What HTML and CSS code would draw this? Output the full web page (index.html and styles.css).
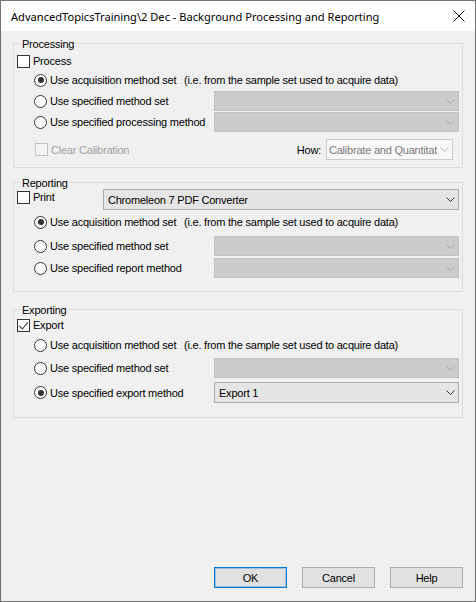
FILE: index.html
```html
<!DOCTYPE html>
<html lang="en">
<head>
    <meta charset="UTF-8">
    <title>Background Processing and Reporting</title>
    <link rel="stylesheet" href="styles.css">
</head>
<body>
    <div class="window">
        <div class="titlebar">
            <span class="title">AdvancedTopicsTraining\2 Dec - Background Processing and Reporting</span>
            <svg class="close" width="12" height="12" viewBox="0 0 12 12">
                <path d="M0.5 0.5 L11.5 11.5 M11.5 0.5 L0.5 11.5" stroke="#111" stroke-width="1" fill="none"/>
            </svg>
        </div>

        <div class="content">
            <!-- Processing -->
            <div class="group processing">
                <span class="legend">Processing</span>
                <label class="check-row"><input type="checkbox">Process</label>
                <div class="row option first">
                    <label class="opt opt-short"><input type="radio" name="proc" checked>Use acquisition method set</label>
                    <span class="note">(i.e. from the sample set used to acquire data)</span>
                </div>
                <div class="row option">
                    <label class="opt"><input type="radio" name="proc">Use specified method set</label>
                    <div class="combo"><span></span><svg class="chev" width="9" height="5" viewBox="0 0 9 5"><path d="M0.5 0.5 L4.5 4.5 L8.5 0.5"/></svg></div>
                </div>
                <div class="row option">
                    <label class="opt"><input type="radio" name="proc">Use specified processing method</label>
                    <div class="combo"><span></span><svg class="chev" width="9" height="5" viewBox="0 0 9 5"><path d="M0.5 0.5 L4.5 4.5 L8.5 0.5"/></svg></div>
                </div>
                <div class="row how-row">
                    <label class="clear disabled"><input type="checkbox" disabled>Clear Calibration</label>
                    <span class="how">How:</span>
                    <div class="combo how-combo"><span>Calibrate and Quantitat</span><svg class="chev" width="9" height="5" viewBox="0 0 9 5"><path d="M0.5 0.5 L4.5 4.5 L8.5 0.5"/></svg></div>
                </div>
            </div>

            <!-- Reporting -->
            <div class="group reporting">
                <span class="legend">Reporting</span>
                <div class="row print-row">
                    <label class="check-row print"><input type="checkbox">Print</label>
                    <div class="combo enabled"><span>Chromeleon 7 PDF Converter</span><svg class="chev" width="9" height="5" viewBox="0 0 9 5"><path d="M0.5 0.5 L4.5 4.5 L8.5 0.5"/></svg></div>
                </div>
                <div class="row option r1">
                    <label class="opt opt-short"><input type="radio" name="rep" checked>Use acquisition method set</label>
                    <span class="note">(i.e. from the sample set used to acquire data)</span>
                </div>
                <div class="row option r2">
                    <label class="opt"><input type="radio" name="rep">Use specified method set</label>
                    <div class="combo"><span></span><svg class="chev" width="9" height="5" viewBox="0 0 9 5"><path d="M0.5 0.5 L4.5 4.5 L8.5 0.5"/></svg></div>
                </div>
                <div class="row option r3">
                    <label class="opt"><input type="radio" name="rep">Use specified report method</label>
                    <div class="combo"><span></span><svg class="chev" width="9" height="5" viewBox="0 0 9 5"><path d="M0.5 0.5 L4.5 4.5 L8.5 0.5"/></svg></div>
                </div>
            </div>

            <!-- Exporting -->
            <div class="group exporting">
                <span class="legend">Exporting</span>
                <label class="check-row"><input type="checkbox" checked>Export</label>
                <div class="row option r1">
                    <label class="opt opt-short"><input type="radio" name="exp">Use acquisition method set</label>
                    <span class="note">(i.e. from the sample set used to acquire data)</span>
                </div>
                <div class="row option r2">
                    <label class="opt"><input type="radio" name="exp">Use specified method set</label>
                    <div class="combo"><span></span><svg class="chev" width="9" height="5" viewBox="0 0 9 5"><path d="M0.5 0.5 L4.5 4.5 L8.5 0.5"/></svg></div>
                </div>
                <div class="row option r3">
                    <label class="opt"><input type="radio" name="exp" checked>Use specified export method</label>
                    <div class="combo enabled"><span>Export 1</span><svg class="chev" width="9" height="5" viewBox="0 0 9 5"><path d="M0.5 0.5 L4.5 4.5 L8.5 0.5"/></svg></div>
                </div>
            </div>
        </div>

        <div class="buttons">
            <button class="default">OK</button>
            <button>Cancel</button>
            <button>Help</button>
        </div>
    </div>
</body>
</html>
```

FILE: styles.css
```css
* {
    box-sizing: border-box;
    margin: 0;
    padding: 0;
    font-family: "Liberation Sans", Arial, sans-serif;
}

body {
    width: 476px;
    height: 602px;
    background-color: #f0f0f0;
}

.window {
    height: 602px;
    display: flex;
    flex-direction: column;
    border: 1px solid #717171;
    background-color: #f0f0f0;
    font-size: 11px;
    letter-spacing: -0.22px;
    color: #000;
}

.titlebar {
    height: 30px;
    display: flex;
    align-items: center;
    justify-content: space-between;
    padding: 0 10px 0 10px;
    background-color: #ffffff;
}

.title {
    font-family: "Noto Sans", sans-serif;
    font-size: 11.1px;
    letter-spacing: 0;
    color: #000;
}

.content {
    flex: 1;
    padding: 12px 12px 0 12px;
}

.group {
    position: relative;
    border: 1px solid #dcdcdc;
    padding: 9px 3px 7px 3px;
}

.legend {
    position: absolute;
    top: -6px;
    left: 7px;
    padding: 0 1px;
    line-height: 13px;
    background-color: #f0f0f0;
}

.row {
    display: flex;
    align-items: center;
    height: 20px;
    white-space: nowrap;
}

.check-row {
    display: flex;
    align-items: center;
    height: 16px;
}

input[type="checkbox"],
input[type="radio"] {
    appearance: none;
    -webkit-appearance: none;
    position: relative;
    flex: none;
    width: 13px;
    height: 13px;
    margin-right: 3px;
    border: 1px solid #333;
    background-color: #fff;
}

input[type="radio"] {
    border-radius: 50%;
}

input[type="radio"]:checked::after {
    content: "";
    position: absolute;
    left: 2.5px;
    top: 2.5px;
    width: 6px;
    height: 6px;
    border-radius: 50%;
    background-color: #333;
}

input[type="checkbox"]:checked::after {
    content: "";
    position: absolute;
    left: 3px;
    top: 0px;
    width: 4px;
    height: 8px;
    border-right: 1px solid #333;
    border-bottom: 1px solid #333;
    transform: rotate(40deg);
}

input[type="checkbox"]:disabled {
    border-color: #c4c4c4;
    background-color: #f4f4f4;
}

.option {
    padding-left: 17px;
}

.processing .option {
    margin-top: 1px;
}

.opt {
    display: flex;
    align-items: center;
    width: 180px;
    flex: none;
}

.opt-short {
    width: 150px;
}

.combo {
    flex: 1;
    height: 20px;
    display: flex;
    align-items: center;
    justify-content: space-between;
    padding: 0 3px 0 4px;
    border: 1px solid #c2c2c2;
    background-color: #cccccc;
    white-space: nowrap;
    overflow: hidden;
}

.combo .chev {
    flex: none;
}

.combo .chev path {
    fill: none;
    stroke: #a9a9a9;
    stroke-width: 1;
}

.combo.enabled {
    background-color: #e5e5e5;
    border-color: #adadad;
    height: 21px;
}

.combo.enabled .chev path {
    stroke: #333;
}

/* processing: clear calibration / how */
.how-row {
    margin-top: 7px;
    height: 21px;
    padding-left: 18px;
}

.clear {
    display: flex;
    align-items: center;
    flex: 1;
}

.disabled {
    color: #a0a0a0;
}

.how {
    margin-right: 5px;
}

.how-combo {
    flex: none;
    width: 127px;
    height: 21px;
    margin-right: 6px;
    padding-left: 2px;
    background-color: #f8f8f8;
    border-color: #cccccc;
    color: #7a7a7a;
}

.how-combo span {
    overflow: hidden;
}

.how-combo .chev path {
    stroke: #b5b5b5;
}

/* reporting */
.reporting {
    margin-top: 14px;
    padding-top: 6px;
    padding-bottom: 13px;
}

.print-row {
    height: 21px;
    align-items: flex-start;
}

.print {
    width: 86px;
    height: 14px;
    margin-top: 1px;
    flex: none;
}

.reporting .r1 { margin-top: 2px; }
.reporting .r2 { margin-top: 4px; }
.reporting .r3 { margin-top: 2px; }

/* exporting */
.exporting {
    margin-top: 17px;
    padding-top: 7px;
    padding-bottom: 14px;
}

.exporting .r1 { margin-top: 2px; }
.exporting .r2 { margin-top: 3px; }
.exporting .r3 { margin-top: 4px; height: 21px; }

/* buttons */
.buttons {
    display: flex;
    justify-content: flex-end;
    gap: 15px;
    padding: 0 12px 13px 12px;
}

.buttons button {
    width: 73px;
    height: 21px;
    border: 1px solid #adadad;
    background-color: #e1e1e1;
    font-size: 11px;
    letter-spacing: -0.22px;
    color: #000;
}

.buttons button.default {
    border-color: #0078d7;
    box-shadow: inset 0 0 0 1px rgba(0, 120, 215, 0.3);
}
```
